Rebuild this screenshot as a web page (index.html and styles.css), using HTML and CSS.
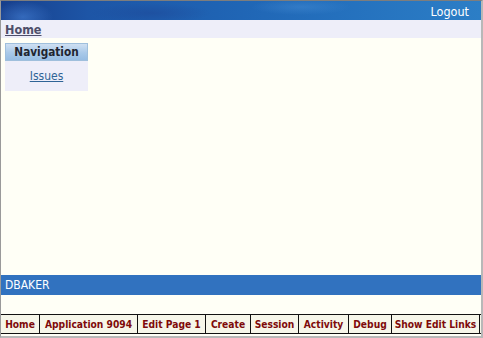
FILE: index.html
```html
<!DOCTYPE html>
<html>
<head>
<meta charset="utf-8">
<link rel="stylesheet" href="styles.css">
</head>
<body>
<div class="frame">
  <div class="header">
    <a class="logout" href="#">Logout</a>
  </div>
  <div class="crumbs"><a href="#" class="crumb">Home</a></div>
  <div class="main">
    <div class="nav">
      <div class="nav-head">Navigation</div>
      <div class="nav-body"><a href="#" class="nav-link">Issues</a></div>
    </div>
  </div>
  <div class="userbar">DBAKER</div>
  <div class="spacer"></div>
  <div class="devbar">
    <a href="#" class="dev">Home</a>
    <a href="#" class="dev">Application 9094</a>
    <a href="#" class="dev">Edit Page 1</a>
    <a href="#" class="dev">Create</a>
    <a href="#" class="dev">Session</a>
    <a href="#" class="dev">Activity</a>
    <a href="#" class="dev">Debug</a>
    <a href="#" class="dev last">Show Edit Links</a>
  </div>
  <div class="tail"></div>
</div>
</body>
</html>
```

FILE: styles.css
```css
html, body {
  margin: 0;
  padding: 0;
  height: 100%;
  background: #fffff6;
}
body {
  font-family: "DejaVu Sans Condensed", "DejaVu Sans", sans-serif;
}
.frame {
  box-sizing: border-box;
  height: 338px;
  width: 483px;
  border-top: 1px solid #7d7d7d;
  border-left: 1px solid #9a9a9a;
  border-right: 2px solid #b8b8b8;
  border-bottom: 2px solid #b8b8b8;
  display: flex;
  flex-direction: column;
  background: #fffff6;
}
.header {
  height: 19px;
  flex: none;
  display: flex;
  justify-content: flex-end;
  align-items: flex-end;
  padding-right: 12px;
  background:
    radial-gradient(ellipse 30px 16px at 22px 16px, rgba(70,130,215,0.6), rgba(70,130,215,0) 100%),
    radial-gradient(ellipse 60px 10px at 150px 12px, rgba(30,70,150,0.5), rgba(30,70,150,0) 100%),
    radial-gradient(ellipse 50px 8px at 300px 6px, rgba(80,150,220,0.35), rgba(80,150,220,0) 100%),
    linear-gradient(90deg, #173f8c 0%, #1d55a6 18%, #1f63b3 45%, #2470bd 70%, #2c7ec6 100%);
}
.logout {
  color: #ffffff;
  text-decoration: none;
  font-size: 12.5px;
  line-height: 15px;
  padding-bottom: 1px;
}
.crumbs {
  height: 18px;
  flex: none;
  background: #eeeef9;
  padding-left: 4px;
  display: flex;
  align-items: center;
}
.crumb {
  color: #4e4e6a;
  font-weight: bold;
  font-size: 12.5px;
  line-height: 15px;
  text-decoration: underline;
}
.main {
  flex: 1;
  padding: 5px 0 0 4px;
}
.nav {
  width: 83px;
}
.nav-head {
  box-sizing: border-box;
  height: 18px;
  border: 1px solid #9fbfdc;
  background: linear-gradient(#cfe0f2, #a9c9e9 55%, #97bde3);
  color: #1f2530;
  font-weight: bold;
  font-size: 11.7px;
  line-height: 16px;
  text-align: center;
}
.nav-body {
  background: #eeeef9;
  height: 30px;
  text-align: center;
  font-size: 12px;
  line-height: 30px;
}
.nav-link {
  color: #2f6496;
  text-decoration: underline;
}
.userbar {
  height: 20px;
  flex: none;
  background: #3172bf;
  color: #ffffff;
  font-size: 12px;
  line-height: 20px;
  padding-left: 4px;
}
.spacer {
  height: 19px;
  flex: none;
}
.devbar {
  flex: none;
  display: grid;
  grid-template-columns: 39px 98px 68px 45px 48px 50px 43px 1fr;
  border-top: 1px solid #111;
  border-bottom: 1px solid #111;
  background: #f6f6e9;
  height: 18px;
}
.dev {
  border-right: 1px solid #111;
  color: #7e0a0a;
  font-weight: bold;
  font-size: 10.2px;
  line-height: 19px;
  text-align: center;
  text-decoration: none;
  white-space: nowrap;
}
.dev.last {
  margin-right: 1px;
}
.tail {
  flex: none;
  height: 2px;
}
```
